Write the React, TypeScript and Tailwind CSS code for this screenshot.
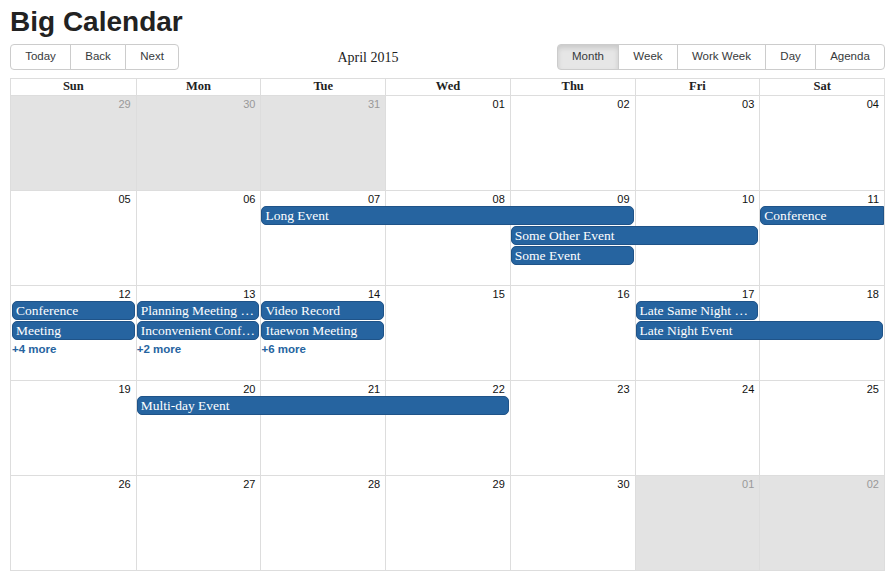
type CalEvent = {
  title: string;
  col: number;
  span: number;
  row: number;
  continuesAfter?: boolean;
};

type Week = {
  days: string[];
  off: number[];
  events: CalEvent[];
  more: { col: number; label: string }[];
};

const weeks: Week[] = [
  {
    days: ["29", "30", "31", "01", "02", "03", "04"],
    off: [0, 1, 2],
    events: [],
    more: [],
  },
  {
    days: ["05", "06", "07", "08", "09", "10", "11"],
    off: [],
    events: [
      { title: "Long Event", col: 2, span: 3, row: 0 },
      { title: "Some Other Event", col: 4, span: 2, row: 1 },
      { title: "Some Event", col: 4, span: 1, row: 2 },
      { title: "Conference", col: 6, span: 1, row: 0, continuesAfter: true },
    ],
    more: [],
  },
  {
    days: ["12", "13", "14", "15", "16", "17", "18"],
    off: [],
    events: [
      { title: "Conference", col: 0, span: 1, row: 0 },
      { title: "Meeting", col: 0, span: 1, row: 1 },
      { title: "Planning Meeting with Paige", col: 1, span: 1, row: 0 },
      { title: "Inconvenient Conference Call", col: 1, span: 1, row: 1 },
      { title: "Video Record", col: 2, span: 1, row: 0 },
      { title: "Itaewon Meeting", col: 2, span: 1, row: 1 },
      { title: "Late Same Night Event", col: 5, span: 1, row: 0 },
      { title: "Late Night Event", col: 5, span: 2, row: 1 },
    ],
    more: [
      { col: 0, label: "+4 more" },
      { col: 1, label: "+2 more" },
      { col: 2, label: "+6 more" },
    ],
  },
  {
    days: ["19", "20", "21", "22", "23", "24", "25"],
    off: [],
    events: [{ title: "Multi-day Event", col: 1, span: 3, row: 0 }],
    more: [],
  },
  {
    days: ["26", "27", "28", "29", "30", "01", "02"],
    off: [5, 6],
    events: [],
    more: [],
  },
];

const colStart = [
  "col-start-1",
  "col-start-2",
  "col-start-3",
  "col-start-4",
  "col-start-5",
  "col-start-6",
  "col-start-7",
];
const colSpan = ["", "col-span-1", "col-span-2", "col-span-3"];
const rowStart = ["row-start-2", "row-start-3", "row-start-4", "row-start-5"];

const dayNames = ["Sun", "Mon", "Tue", "Wed", "Thu", "Fri", "Sat"];

const btn =
  "h-[26px] px-[14.2px] border border-[#ccc] text-[11.5px] text-[#373a3c] font-['Liberation_Sans',Arial,sans-serif] -ml-px first:ml-0 first:rounded-l-[4px] last:rounded-r-[4px] bg-white";

function Toolbar() {
  const views = ["Month", "Week", "Work Week", "Day", "Agenda"];
  return (
    <div className="flex items-center h-[26px] mb-[8px]">
      <div className="flex">
        {["Today", "Back", "Next"].map((b) => (
          <button key={b} className={btn}>
            {b}
          </button>
        ))}
      </div>
      <div className="flex-1 text-center text-[14px] text-[#222] font-['Liberation_Serif',serif]">
        April 2015
      </div>
      <div className="flex">
        {views.map((v) => (
          <button
            key={v}
            className={
              v === "Month"
                ? btn + " !bg-[#e6e6e6] border-[#adadad] shadow-[inset_0_3px_5px_rgba(0,0,0,0.125)]"
                : btn
            }
          >
            {v}
          </button>
        ))}
      </div>
    </div>
  );
}

function WeekRow({ week }: { week: Week }) {
  return (
    <div className="grid grid-cols-7 grid-rows-[15px_20px_20px_20px_1fr] h-[95px] border-t border-[#ddd]">
      {week.days.map((d, i) => {
        const off = week.off.includes(i);
        return (
          <div
            key={i}
            className={`row-span-full ${colStart[i]} ${i > 0 ? "border-l border-[#ddd]" : ""} ${
              off ? "bg-[#e3e3e3]" : "bg-white"
            }`}
          >
            <div
              className={`text-right pr-[5px] pt-px text-[11px] leading-[14px] font-['Liberation_Sans',Arial,sans-serif] ${
                off ? "text-[#999]" : "text-[#111]"
              }`}
            >
              {d}
            </div>
          </div>
        );
      })}
      {week.events.map((e, i) => (
        <div
          key={i}
          className={`${colStart[e.col]} ${colSpan[e.span]} ${rowStart[e.row]} ${
            e.continuesAfter ? "ml-px" : "mx-px"
          } h-[19px] min-w-0`}
        >
          <div
            className={`h-full bg-[#2664a0] border border-[#1f5388] ${
              e.continuesAfter ? "rounded-l-[5px]" : "rounded-[5px]"
            } pl-[3px] pr-[3px] text-white text-[13.5px] leading-[17px] font-['Liberation_Serif',serif] truncate`}
          >
            {e.title}
          </div>
        </div>
      ))}
      {week.more.map((m, i) => (
        <div
          key={"m" + i}
          className={`${colStart[m.col]} row-start-4 pl-px pt-[2px] text-[11.5px] leading-[13px] font-bold text-[#2664a0] font-['Liberation_Sans',Arial,sans-serif]`}
        >
          {m.label}
        </div>
      ))}
    </div>
  );
}

export default function App() {
  return (
    <div className="bg-white min-h-[581px]">
      <div className="ml-[10px] w-[875px]">
        <h1 className="pt-[5px] mb-[5px] text-[28px] leading-[34px] font-bold text-[#222] font-['Liberation_Sans',Arial,sans-serif]">
          Big Calendar
        </h1>
        <Toolbar />
        <div className="border border-[#ddd]">
          <div className="grid grid-cols-7 h-[16px]">
            {dayNames.map((d, i) => (
              <div
                key={d}
                className={`text-center text-[12.5px] leading-[15px] font-bold text-[#222] font-['Liberation_Serif',serif] ${
                  i > 0 ? "border-l border-[#ddd]" : ""
                }`}
              >
                {d}
              </div>
            ))}
          </div>
          {weeks.map((w, i) => (
            <WeekRow key={i} week={w} />
          ))}
        </div>
      </div>
    </div>
  );
}
